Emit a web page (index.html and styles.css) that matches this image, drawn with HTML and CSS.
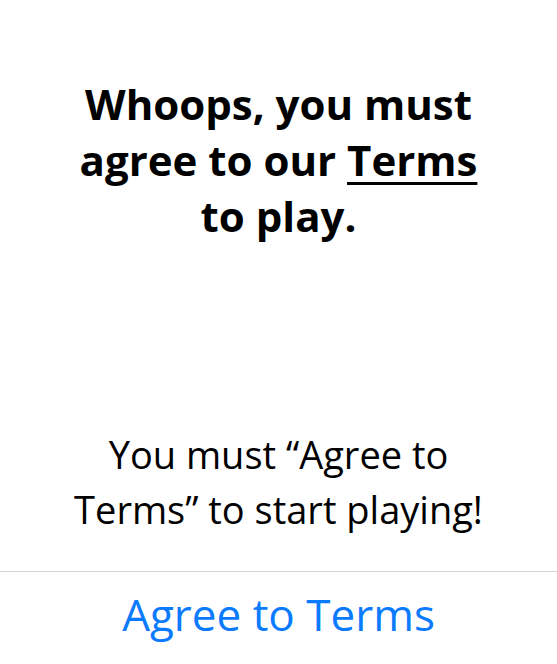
FILE: index.html
```html
<!DOCTYPE html>
<html lang="en">
<head>
<meta charset="utf-8">
<title>Terms</title>
<link rel="stylesheet" href="styles.css">
</head>
<body>
<main class="screen">
  <section class="content">
    <h1 class="title">Whoops, you must agree to our <a class="terms-link" href="#">Terms</a> to play.</h1>
    <p class="message">You must “Agree to Terms” to start playing!</p>
  </section>
  <footer class="actions">
    <button class="agree-btn" type="button">Agree to Terms</button>
  </footer>
</main>
</body>
</html>
```

FILE: styles.css
```css
* { box-sizing: border-box; }
html, body {
  margin: 0;
  padding: 0;
  height: 100%;
  background: #ffffff;
}
body {
  font-family: "Open Sans", "Noto Sans", "Liberation Sans", sans-serif;
  color: #000;
}
.screen {
  height: 664px;
  display: flex;
  flex-direction: column;
}
.content {
  flex: 1;
  display: flex;
  flex-direction: column;
  align-items: center;
  justify-content: space-between;
  padding: 76px 40px 34px;
}
.title {
  margin: 0;
  font-size: 42px;
  font-weight: 700;
  line-height: 56px;
  text-align: center;
  max-width: 420px;
}
.terms-link {
  color: #000;
  text-decoration: underline;
  text-decoration-thickness: 3px;
  text-underline-offset: 6px;
}
.message {
  margin: 0;
  font-size: 38px;
  font-weight: 400;
  line-height: 55px;
  text-align: center;
  max-width: 430px;
}
.actions {
  height: 93px;
  border-top: 1px solid #d4d4d4;
  display: flex;
  align-items: center;
  justify-content: center;
  padding-bottom: 8px;
}
.agree-btn {
  border: 0;
  background: none;
  padding: 0;
  font-family: inherit;
  font-size: 44px;
  line-height: 1.2;
  color: #0a7aff;
  cursor: pointer;
}
```
